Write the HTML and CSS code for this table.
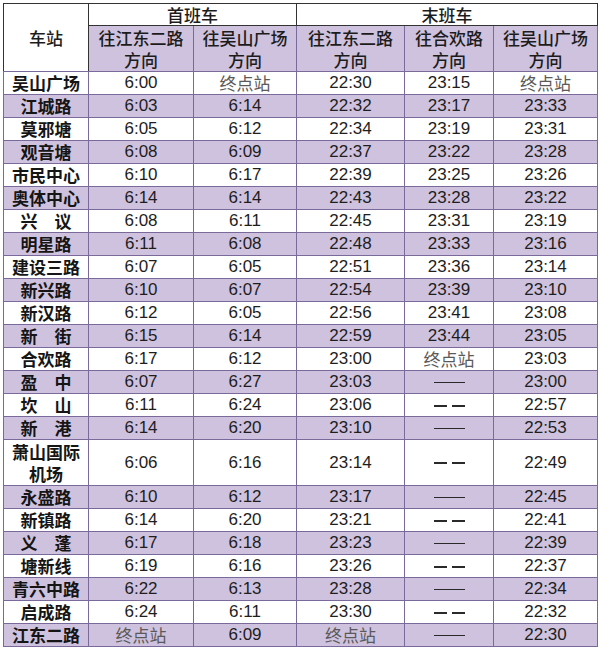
FILE: index.html
```html
<!DOCTYPE html>
<html lang="zh">
<head>
<meta charset="utf-8">
<link rel="stylesheet" href="styles.css">
</head>
<body>
<table class="tt">
  <colgroup>
    <col class="c1"><col class="c2"><col class="c3"><col class="c4"><col class="c5"><col class="c6">
  </colgroup>
  <thead>
    <tr class="h1">
      <th rowspan="2" class="st-h">车站</th>
      <th colspan="2">首班车</th>
      <th colspan="3">末班车</th>
    </tr>
    <tr class="h2">
      <th>往江东二路<br>方向</th>
      <th>往吴山广场<br>方向</th>
      <th>往江东二路<br>方向</th>
      <th>往合欢路<br>方向</th>
      <th>往吴山广场<br>方向</th>
    </tr>
  </thead>
  <tbody>
    <tr><td class="st">吴山广场</td><td>6:00</td><td class="end">终点站</td><td>22:30</td><td>23:15</td><td class="end">终点站</td></tr>
    <tr class="alt"><td class="st">江城路</td><td>6:03</td><td>6:14</td><td>22:32</td><td>23:17</td><td>23:33</td></tr>
    <tr><td class="st">莫邪塘</td><td>6:05</td><td>6:12</td><td>22:34</td><td>23:19</td><td>23:31</td></tr>
    <tr class="alt"><td class="st">观音塘</td><td>6:08</td><td>6:09</td><td>22:37</td><td>23:22</td><td>23:28</td></tr>
    <tr><td class="st">市民中心</td><td>6:10</td><td>6:17</td><td>22:39</td><td>23:25</td><td>23:26</td></tr>
    <tr class="alt"><td class="st">奥体中心</td><td>6:14</td><td>6:14</td><td>22:43</td><td>23:28</td><td>23:22</td></tr>
    <tr><td class="st">兴　议</td><td>6:08</td><td>6:11</td><td>22:45</td><td>23:31</td><td>23:19</td></tr>
    <tr class="alt"><td class="st">明星路</td><td>6:11</td><td>6:08</td><td>22:48</td><td>23:33</td><td>23:16</td></tr>
    <tr><td class="st">建设三路</td><td>6:07</td><td>6:05</td><td>22:51</td><td>23:36</td><td>23:14</td></tr>
    <tr class="alt"><td class="st">新兴路</td><td>6:10</td><td>6:07</td><td>22:54</td><td>23:39</td><td>23:10</td></tr>
    <tr><td class="st">新汉路</td><td>6:12</td><td>6:05</td><td>22:56</td><td>23:41</td><td>23:08</td></tr>
    <tr class="alt"><td class="st">新　街</td><td>6:15</td><td>6:14</td><td>22:59</td><td>23:44</td><td>23:05</td></tr>
    <tr><td class="st">合欢路</td><td>6:17</td><td>6:12</td><td>23:00</td><td class="end">终点站</td><td>23:03</td></tr>
    <tr class="alt"><td class="st">盈　中</td><td>6:07</td><td>6:27</td><td>23:03</td><td><span class="line"></span></td><td>23:00</td></tr>
    <tr><td class="st">坎　山</td><td>6:11</td><td>6:24</td><td>23:06</td><td><span class="dd"></span></td><td>22:57</td></tr>
    <tr class="alt"><td class="st">新　港</td><td>6:14</td><td>6:20</td><td>23:10</td><td><span class="line"></span></td><td>22:53</td></tr>
    <tr class="dbl"><td class="st">萧山国际<br>机场</td><td>6:06</td><td>6:16</td><td>23:14</td><td><span class="dd"></span></td><td>22:49</td></tr>
    <tr class="alt"><td class="st">永盛路</td><td>6:10</td><td>6:12</td><td>23:17</td><td><span class="line"></span></td><td>22:45</td></tr>
    <tr><td class="st">新镇路</td><td>6:14</td><td>6:20</td><td>23:21</td><td><span class="dd"></span></td><td>22:41</td></tr>
    <tr class="alt"><td class="st">义　蓬</td><td>6:17</td><td>6:18</td><td>23:23</td><td><span class="line"></span></td><td>22:39</td></tr>
    <tr><td class="st">塘新线</td><td>6:19</td><td>6:16</td><td>23:26</td><td><span class="dd"></span></td><td>22:37</td></tr>
    <tr class="alt"><td class="st">青六中路</td><td>6:22</td><td>6:13</td><td>23:28</td><td><span class="line"></span></td><td>22:34</td></tr>
    <tr><td class="st">启成路</td><td>6:24</td><td>6:11</td><td>23:30</td><td><span class="dd"></span></td><td>22:32</td></tr>
    <tr class="alt"><td class="st">江东二路</td><td class="end">终点站</td><td>6:09</td><td class="end">终点站</td><td><span class="line"></span></td><td>22:30</td></tr>
  </tbody>
</table>
</body>
</html>
```

FILE: styles.css
```css
html, body {
  margin: 0;
  padding: 0;
  background: #ffffff;
}

body {
  padding: 3px 0 0 3px;
  font-family: "Liberation Sans", "Noto Sans CJK SC", sans-serif;
  color: #1a1a1a;
}

.tt {
  border-collapse: collapse;
  table-layout: fixed;
  width: 594px;
  border-top: 1px solid #2f2f2f;
  border-left: 1px solid #3a3a3a;
  border-right: 1px solid #5d5277;
  border-bottom: 1px solid #5d5277;
}

.c1 { width: 85px; }
.c2 { width: 105px; }
.c3 { width: 103px; }
.c4 { width: 108px; }
.c5 { width: 89px; }
.c6 { width: 104px; }

.tt th,
.tt td {
  padding: 0;
  text-align: center;
  vertical-align: middle;
  border: 1px solid #7a6a9c;
}

.tt th {
  font-family: "Noto Sans CJK SC", sans-serif;
  font-weight: 500;
  font-size: 17px;
  line-height: 22px;
  color: #1c1c1c;
}

.h1 th {
  height: 21px;
  background: #ffffff;
  border-color: #333333;
  line-height: 20px;
}

.h1 th.st-h {
  border-color: #333333;
  border-bottom-color: #7a6a9c;
}

.h2 th {
  height: 45px;
  background: #cec2de;
  border-top-color: #333333;
}

.tt td {
  height: 22px;
  font-size: 17px;
  line-height: 20px;
  color: #1e1e1e;
}

.tt tr.dbl td {
  height: 45px;
}

.tt tr.alt td {
  background: #cec2de;
}

.tt td.st {
  font-family: "Noto Sans CJK SC", sans-serif;
  font-weight: 700;
  font-size: 17px;
  line-height: 22px;
  color: #151515;
}

.tt td.end {
  font-family: "Noto Sans CJK SC", sans-serif;
  font-weight: 400;
  font-size: 17px;
  color: #5a5a5a;
}

.line {
  display: inline-block;
  width: 31px;
  height: 1px;
  background: #2a2a2a;
  vertical-align: middle;
}

.dd {
  display: inline-block;
  width: 31px;
  height: 2px;
  vertical-align: middle;
  background: linear-gradient(to right, #2a2a2a 0, #2a2a2a 13px, transparent 13px, transparent 18px, #2a2a2a 18px, #2a2a2a 31px);
}
```
